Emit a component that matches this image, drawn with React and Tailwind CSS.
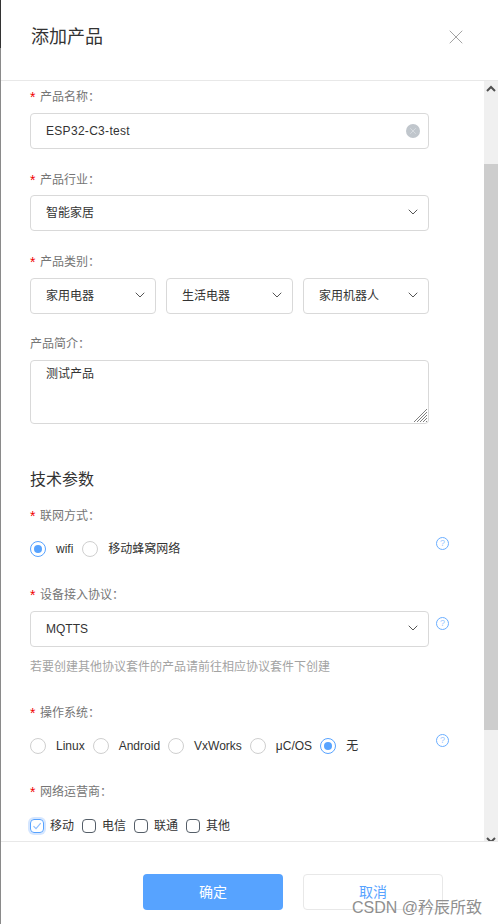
import React from 'react';
import { X, ChevronDown } from 'lucide-react';

const Label = ({ text, required = true, className = '' }) => (
    <div className={`flex h-5 items-center pt-px text-xs text-[#757575] ${className}`}>
        {required && <span className="w-[10px] text-sm leading-none text-[#f00000]">*</span>}
        <span>{text}：</span>
    </div>
);

const Select = ({ value, className = '' }) => (
    <div className={`flex h-9 items-center justify-between rounded-sm border border-[#d9d9d9] pl-[15px] pr-[7px] text-xs text-[#333333] ${className}`}>
        <span>{value}</span>
        <ChevronDown className="h-4 w-4 -translate-y-px text-[#555555]" strokeWidth={1.5} />
    </div>
);

const Radio = ({ label, checked }) => (
    <div className="flex items-center gap-[10px] text-xs text-[#333333]">
        <span className={`flex h-4 w-4 items-center justify-center rounded-full border ${checked ? 'border-[#57a3ff]' : 'border-[#cfcfcf]'}`}>
            {checked && <span className="h-2 w-2 rounded-full bg-[#57a3ff]" />}
        </span>
        <span>{label}</span>
    </div>
);

const Check = ({ label, checked }) => (
    <div className="flex items-center gap-[6px] text-xs text-[#333333]">
        {checked ? (
            <span className="flex h-[14px] w-[14px] items-center justify-center rounded-sm border border-[#57a3ff] ring-2 ring-[#d5e6ff]">
                <svg width="10" height="10" viewBox="0 0 10 10" fill="none" stroke="#8fbfff" strokeWidth="1.2">
                    <path d="M1.5 5.2 4 7.7 8.7 2.2" />
                </svg>
            </span>
        ) : (
            <span className="h-[14px] w-[14px] rounded-sm border border-[#555e68]" />
        )}
        <span>{label}</span>
    </div>
);

const Help = ({ className = '' }) => (
    <span className={`absolute left-[406px] flex h-[13px] w-[13px] items-center justify-center rounded-full border border-[#6aaeff] text-[9px] leading-none text-[#9cc8ff] ${className}`}>
        ?
    </span>
);

const App = () => {
    return (
        <div className="relative flex h-[924px] w-[498px] overflow-hidden bg-white font-['Liberation_Sans','Noto_Sans_CJK_SC',sans-serif]">
            {/* edge of the page behind the drawer */}
            <div className="flex w-px flex-col bg-[#8a8a8a]">
                <div className="h-12 bg-[#333333]" />
            </div>

            <div className="flex min-w-0 flex-1 flex-col">
                <div className="flex h-[81px] shrink-0 items-start justify-between border-b border-[#e8e8e8] pl-[30px] pr-[30px] pt-[25px]">
                    <h1 className="text-lg leading-6 text-[#333333]">添加产品</h1>
                    <X className="h-[24px] w-[24px] text-[#8c8c8c]" strokeWidth={0.8} />
                </div>

                <div className="flex h-[760px] shrink-0 overflow-hidden">
                    <div className="relative flex-1 pl-[29px] pr-[55px] pt-[5px]">
                        <Label text="产品名称" />
                        <div className="mt-[7px] flex h-9 items-center justify-between rounded-sm border border-[#d9d9d9] pl-[15px] pr-[8px] text-xs tracking-[0.3px] text-[#333333]">
                            <span>ESP32-C3-test</span>
                            <span className="flex h-[14px] w-[14px] items-center justify-center rounded-full bg-[#c0c6cc]">
                                <X className="h-[10px] w-[10px] text-[#e4e7ea]" strokeWidth={1.5} />
                            </span>
                        </div>

                        <Label text="产品行业" className="mt-5" />
                        <Select value="智能家居" className="mt-[6px]" />

                        <Label text="产品类别" className="mt-[20px]" />
                        <div className="mt-[7px] flex gap-[10px]">
                            <Select value="家用电器" className="w-[126px]" />
                            <Select value="生活电器" className="w-[127px]" />
                            <Select value="家用机器人" className="w-[126px]" />
                        </div>

                        <Label text="产品简介" required={false} className="mt-[19px]" />
                        <div className="relative mt-[7px] h-16 rounded-sm border border-[#d9d9d9] pl-[15px] pt-[3px] text-xs leading-5 text-[#333333]">
                            测试产品
                            <svg className="absolute bottom-0 right-0" width="15" height="15" viewBox="0 0 15 15" stroke="#808080" strokeWidth="1">
                                <path d="M1 14 14 1M4 14 14 4M7 14 14 7M10 14 14 10M13 14 14 13" />
                            </svg>
                        </div>

                        <h2 className="mt-[44px] text-base leading-6 text-[#333333]">技术参数</h2>

                        <Label text="联网方式" className="mt-[13px]" />
                        <div className="relative mt-[16px] flex h-4 items-center gap-[9px]">
                            <Radio label="wifi" checked />
                            <Radio label="移动蜂窝网络" />
                            <Help className="top-[-4px]" />
                        </div>

                        <Label text="设备接入协议" className="mt-[27px]" />
                        <div className="relative mt-[7px]">
                            <Select value="MQTTS" />
                            <Help className="top-[6px]" />
                        </div>
                        <p className="mt-[10px] h-5 text-xs leading-5 text-[#a3a3a3]">若要创建其他协议套件的产品请前往相应协议套件下创建</p>

                        <Label text="操作系统" className="mt-[25px]" />
                        <div className="relative mt-[16px] flex h-4 items-center gap-2">
                            <Radio label="Linux" />
                            <Radio label="Android" />
                            <Radio label="VxWorks" />
                            <Radio label="μC/OS" />
                            <Radio label="无" checked />
                            <Help className="top-[-4px]" />
                        </div>

                        <Label text="网络运营商" className="mt-[27px]" />
                        <div className="mt-[18px] flex h-[14px] items-center gap-2">
                            <Check label="移动" checked />
                            <Check label="电信" />
                            <Check label="联通" />
                            <Check label="其他" />
                        </div>
                    </div>

                    <div className="relative w-[14px] shrink-0 bg-[#f0f0f0]">
                        <svg className="absolute left-[2px] top-[4px]" width="10" height="8" viewBox="0 0 10 8" fill="none" stroke="#505050" strokeWidth="2">
                            <path d="M1 6 5 2 9 6" />
                        </svg>
                        <div className="absolute left-0 top-[83px] h-[566px] w-[14px] bg-[#cdcdcd]" />
                        <svg className="absolute bottom-[-3px] left-[2px]" width="10" height="8" viewBox="0 0 10 8" fill="none" stroke="#505050" strokeWidth="2">
                            <path d="M1 2 5 6 9 2" />
                        </svg>
                    </div>
                </div>

                <div className="flex flex-1 justify-end gap-5 border-t border-[#e8e8e8] pr-[55px] pt-[32px]">
                    <button className="h-9 w-[140px] rounded-sm bg-[#57a3ff] text-sm text-white">确定</button>
                    <button className="h-9 w-[140px] rounded-sm border border-[#e8e8e8] text-sm text-[#57a3ff]">取消</button>
                </div>
            </div>

            <div className="absolute left-[352px] top-[898px] text-base leading-5 text-[#8f8f8f]">CSDN @矜辰所致</div>
        </div>
    );
};

export default App;
